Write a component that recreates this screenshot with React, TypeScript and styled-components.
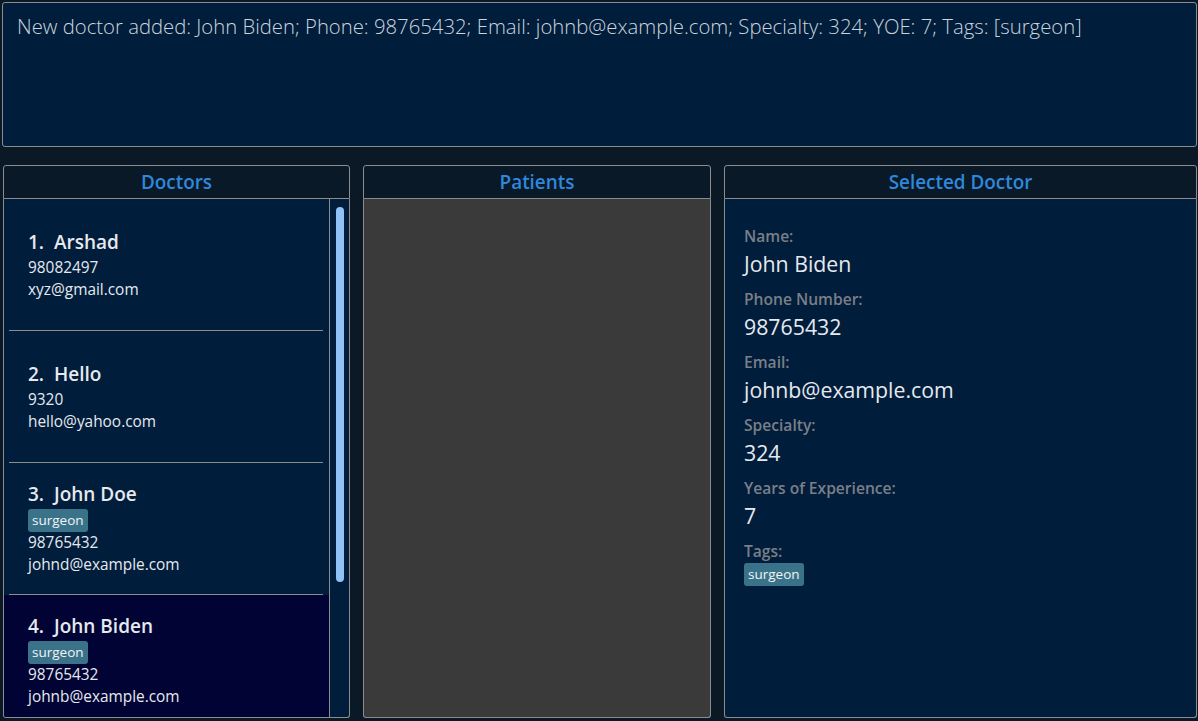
import React from "react";
import styled, { createGlobalStyle } from "styled-components";

const colors = {
  page: "#0b1826",
  panel: "#001d3c",
  header: "#0a1928",
  border: "#8c8c8c",
  title: "#2f88dc",
  text: "#e6e9ee",
  label: "#7b7f86",
  tag: "#3a7389",
  selected: "#000333",
  patients: "#3a3a3a",
  thumb: "#8fc3f5",
};

const GlobalStyle = createGlobalStyle`
  html, body {
    margin: 0;
    padding: 0;
    background: ${colors.page};
    font-family: "Open Sans", "Noto Sans", sans-serif;
  }
  * { box-sizing: border-box; }
`;

const Page = styled.div`
  width: 1198px;
  height: 721px;
  padding: 2px 1px 3px 2px;
  display: flex;
  flex-direction: column;
  gap: 18px;
  overflow: hidden;
`;

const ResultBox = styled.div`
  height: 145px;
  background: ${colors.panel};
  border: 1px solid ${colors.border};
  border-radius: 3px;
  padding: 9px 14px;
  color: #ccd4dc;
  font-size: 20.3px;
  font-weight: 300;
`;

const Columns = styled.div`
  flex: 1;
  display: grid;
  grid-template-columns: 347px 348px 1fr;
  gap: 13px;
  padding-left: 1px;
  min-height: 0;
`;

const Panel = styled.section`
  display: flex;
  flex-direction: column;
  min-height: 0;
`;

const PanelHeader = styled.div`
  height: 34px;
  background: ${colors.header};
  border: 1px solid ${colors.border};
  border-radius: 3px 3px 0 0;
  display: flex;
  align-items: center;
  justify-content: center;
  color: ${colors.title};
  font-size: 18.9px;
  font-weight: 600;
`;

const PanelBody = styled.div<{ $bg: string }>`
  flex: 1;
  min-height: 0;
  background: ${({ $bg }) => $bg};
  border: 1px solid ${colors.border};
  border-top: none;
  border-radius: 0 0 3px 3px;
  display: flex;
  overflow: hidden;
`;

const List = styled.div`
  flex: 1;
  display: flex;
  flex-direction: column;
`;

const Card = styled.div<{ $selected: boolean }>`
  background: ${({ $selected }) => ($selected ? colors.selected : colors.panel)};
  flex-shrink: 0;
`;

const CardInner = styled.div`
  margin: 0 6px 0 5px;
  height: 132px;
  border-bottom: 1px solid ${colors.border};
  padding-left: 19px;
  display: flex;
  flex-direction: column;
  justify-content: center;
  color: ${colors.text};
`;

const CardName = styled.div`
  font-size: 19px;
  font-weight: 600;
  line-height: 26px;
  margin-bottom: 2px;
  white-space: pre;
`;

const CardLine = styled.div`
  font-size: 15.4px;
  line-height: 22px;
`;

const Tag = styled.span`
  align-self: flex-start;
  background: ${colors.tag};
  color: #f2f4f6;
  font-size: 13.5px;
  line-height: 23px;
  padding: 0 4px;
  border-radius: 3px;
`;

const ScrollTrack = styled.div`
  width: 20px;
  border-left: 1px solid ${colors.border};
  padding: 8px 0 0 6px;
`;

const Thumb = styled.div`
  width: 8px;
  height: 375px;
  border-radius: 4px;
  background: ${colors.thumb};
`;

const Details = styled.div`
  padding: 25px 19px;
  display: flex;
  flex-direction: column;
`;

const Label = styled.div`
  color: ${colors.label};
  font-size: 15.6px;
  font-weight: 600;
  line-height: 24px;
`;

const Value = styled.div`
  color: ${colors.text};
  font-size: 21.3px;
  line-height: 32px;
  margin-bottom: 7px;
`;

type Doctor = {
  name: string;
  phone: string;
  email: string;
  tags: string[];
};

const doctors: Doctor[] = [
  { name: "Arshad", phone: "98082497", email: "xyz@gmail.com", tags: [] },
  { name: "Hello", phone: "9320", email: "hello@yahoo.com", tags: [] },
  { name: "John Doe", phone: "98765432", email: "johnd@example.com", tags: ["surgeon"] },
  { name: "John Biden", phone: "98765432", email: "johnb@example.com", tags: ["surgeon"] },
];

const details = [
  ["Name:", "John Biden"],
  ["Phone Number:", "98765432"],
  ["Email:", "johnb@example.com"],
  ["Specialty:", "324"],
  ["Years of Experience:", "7"],
];

export default function App() {
  return (
    <>
      <GlobalStyle />
      <Page>
        <ResultBox>
          New doctor added: John Biden; Phone: 98765432; Email: johnb@example.com;
          Specialty: 324; YOE: 7; Tags: [surgeon]
        </ResultBox>
        <Columns>
          <Panel>
            <PanelHeader>Doctors</PanelHeader>
            <PanelBody $bg={colors.panel}>
              <List>
                {doctors.map((d, i) => (
                  <Card key={d.name} $selected={i === 3}>
                    <CardInner>
                      <CardName>{`${i + 1}.  ${d.name}`}</CardName>
                      {d.tags.map((t) => (
                        <Tag key={t}>{t}</Tag>
                      ))}
                      <CardLine>{d.phone}</CardLine>
                      <CardLine>{d.email}</CardLine>
                    </CardInner>
                  </Card>
                ))}
              </List>
              <ScrollTrack>
                <Thumb />
              </ScrollTrack>
            </PanelBody>
          </Panel>
          <Panel>
            <PanelHeader>Patients</PanelHeader>
            <PanelBody $bg={colors.patients} />
          </Panel>
          <Panel>
            <PanelHeader>Selected Doctor</PanelHeader>
            <PanelBody $bg={colors.panel}>
              <Details>
                {details.map(([l, v]) => (
                  <React.Fragment key={l}>
                    <Label>{l}</Label>
                    <Value>{v}</Value>
                  </React.Fragment>
                ))}
                <Label>Tags:</Label>
                <Tag>surgeon</Tag>
              </Details>
            </PanelBody>
          </Panel>
        </Columns>
      </Page>
    </>
  );
}
